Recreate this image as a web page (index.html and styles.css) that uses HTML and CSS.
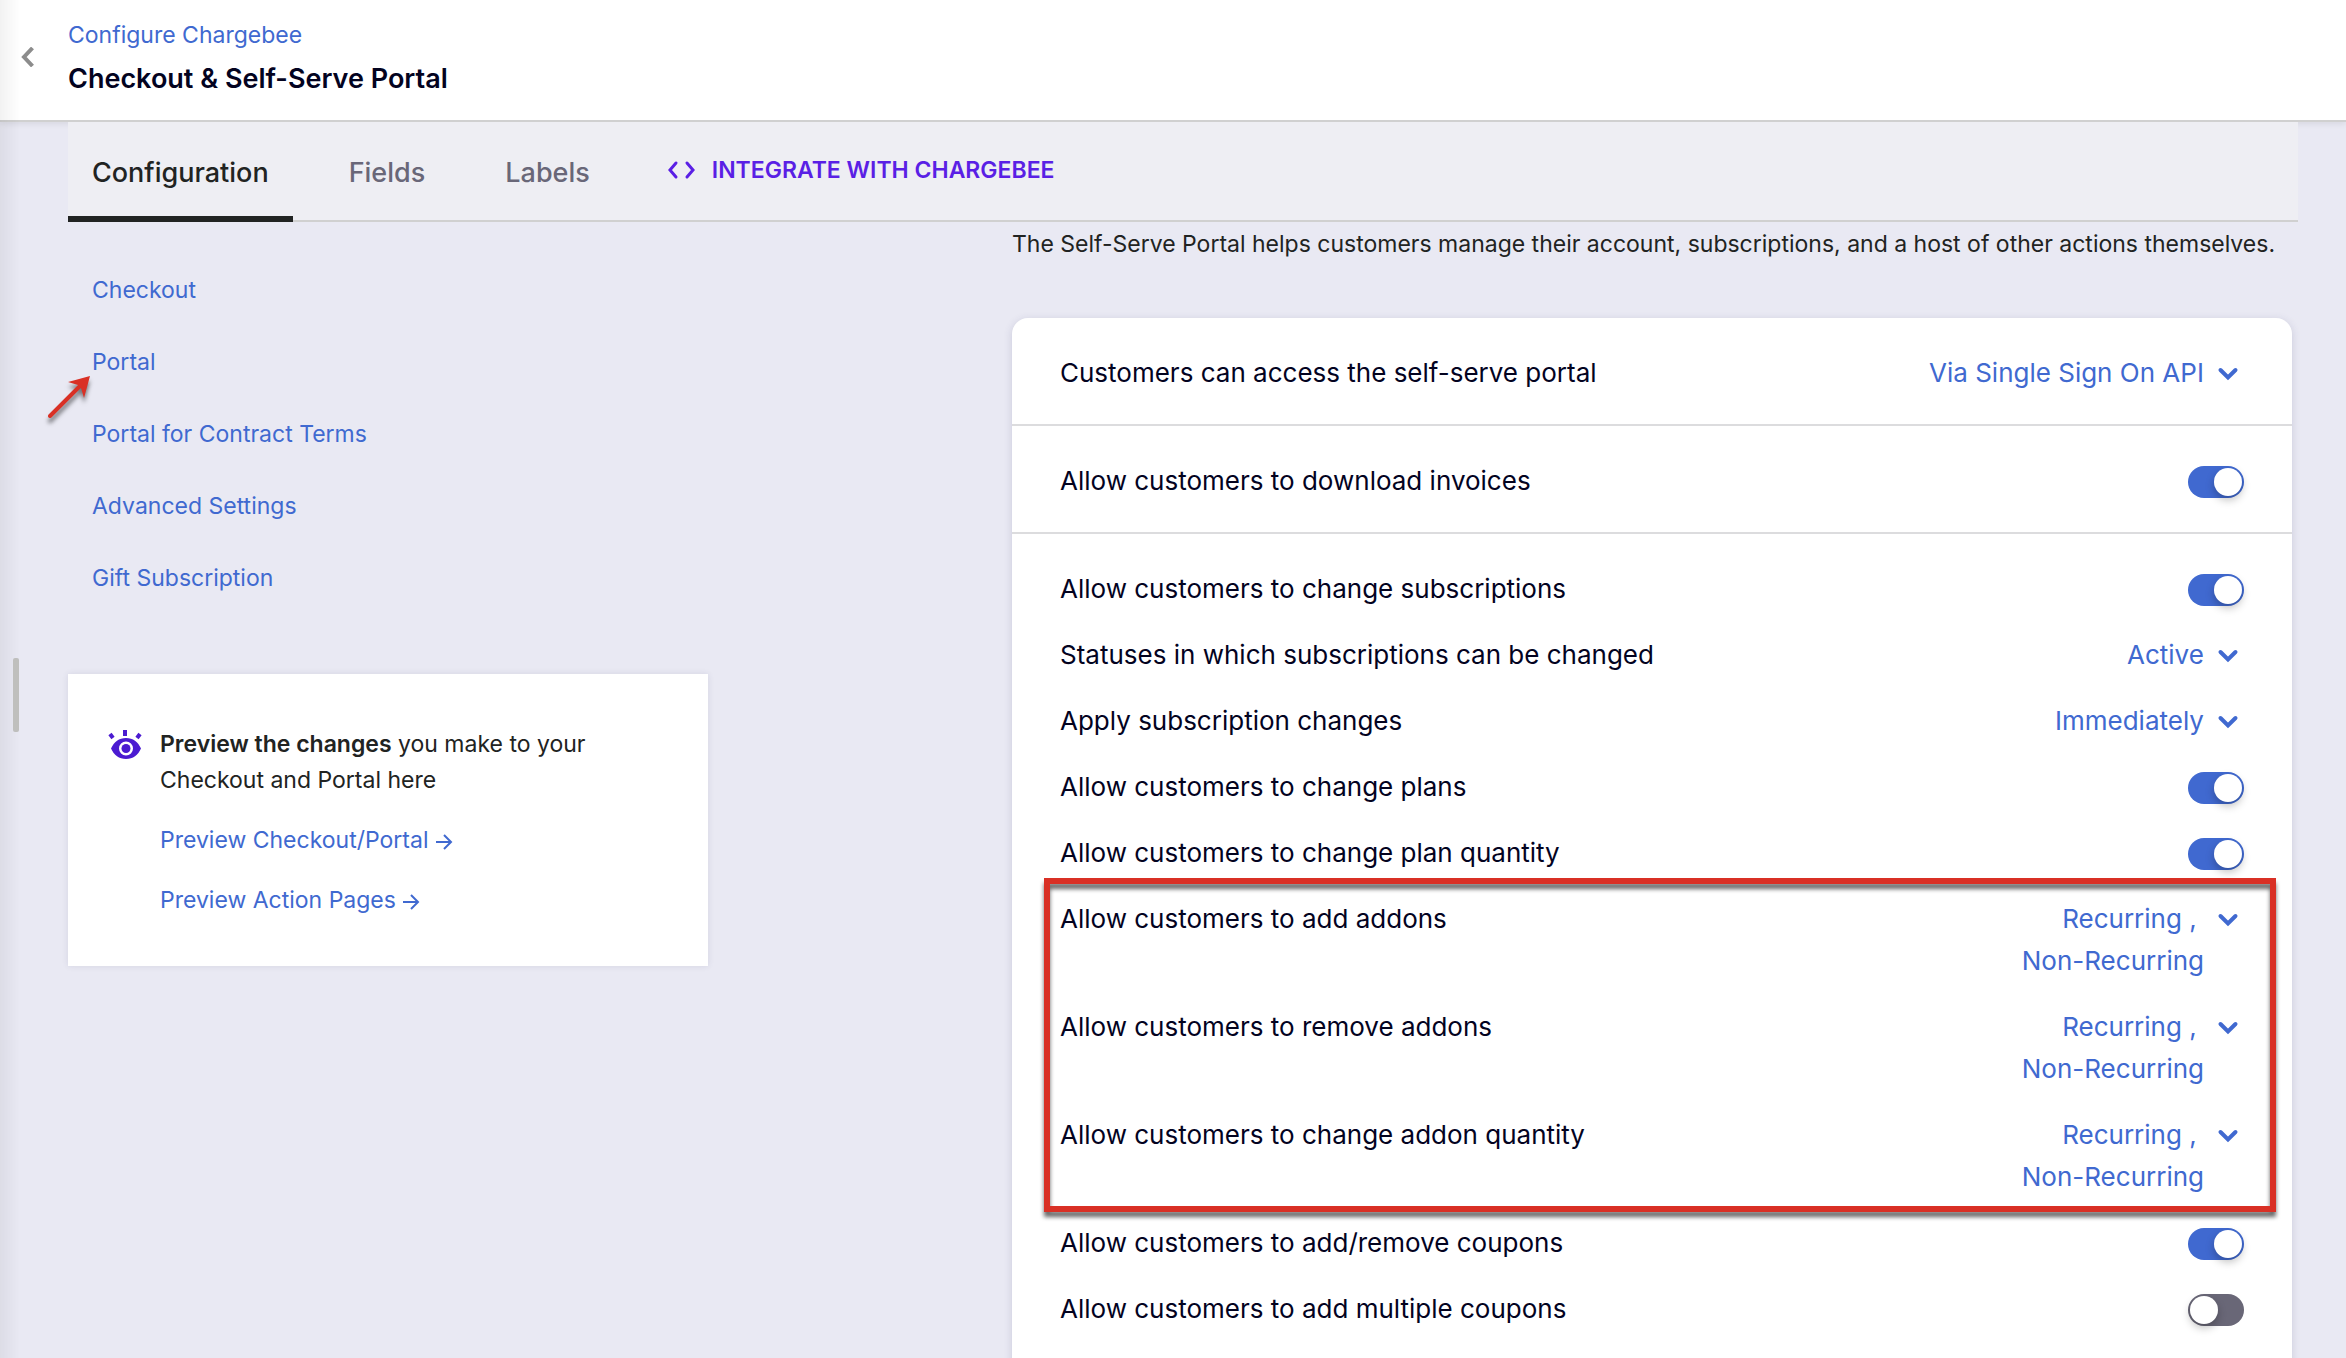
FILE: index.html
```html
<!DOCTYPE html>
<html lang="en">
<head>
  <meta charset="UTF-8">
  <title>Checkout & Self-Serve Portal</title>
  <link rel="stylesheet" href="styles.css">
</head>
<body>
  <!-- Shared icons -->
  <svg class="sprite" aria-hidden="true">
    <symbol id="chevron" viewBox="0 0 32 32">
      <path d="M8.500 12 L16 19.500 L23.500 12" fill="none" stroke="currentColor" stroke-width="4" stroke-linecap="round"/>
    </symbol>
    <symbol id="arrow" viewBox="0 0 18 18">
      <path d="M1 9 H16 M9 2 L16 9 L9 16" fill="none" stroke="currentColor" stroke-width="2"/>
    </symbol>
  </svg>

  <!-- Header -->
  <header class="header">
    <button class="back" aria-label="Back">
      <svg width="14" height="20" viewBox="0 0 14 20"><path d="M12.500 1 L4 10 L12.500 19" fill="none" stroke="#8c8c8c" stroke-width="4"/></svg>
    </button>
    <div class="heading">
      <a class="breadcrumb" href="#">Configure Chargebee</a>
      <h1>Checkout &amp; Self-Serve Portal</h1>
    </div>
  </header>

  <main class="page">
    <!-- Tabs -->
    <nav class="tabs">
      <a class="tab active" href="#">Configuration</a>
      <a class="tab" href="#">Fields</a>
      <a class="tab" href="#">Labels</a>
      <a class="tab integrate" href="#">
        <svg width="30" height="20" viewBox="0 0 30 20"><path d="M10 3 L4 10 L10 17 M21 3 L27 10 L21 17" fill="none" stroke="currentColor" stroke-width="3" stroke-linecap="round"/></svg>
        INTEGRATE WITH CHARGEBEE
      </a>
    </nav>

    <div class="content">
      <!-- Left column -->
      <aside>
        <ul class="side-nav">
          <li><a href="#">Checkout</a></li>
          <li>
            <a href="#">Portal</a>
            <svg class="pointer" width="52" height="56" viewBox="0 0 52 56">
              <path d="M8 44 L38 14" stroke="#d93025" stroke-width="4" stroke-linecap="round"/>
              <path d="M48 4 L26 10 L36 13 L39 16 L42 26 Z" fill="#d93025"/>
            </svg>
          </li>
          <li><a href="#">Portal for Contract Terms</a></li>
          <li><a href="#">Advanced Settings</a></li>
          <li><a href="#">Gift Subscription</a></li>
        </ul>

        <section class="preview">
          <svg width="34" height="32" viewBox="0 0 34 32">
            <path fill="#4b1bd1" fill-rule="evenodd" d="M3 18.500 C6 12 11 8 18 8 C25 8 30 12 33 18.500 C30 25 25 29 18 29 C11 29 6 25 3 18.500 Z M18 11.500 A7 7 0 1 0 18 25.500 A7 7 0 1 0 18 11.500 Z"/>
            <circle cx="18" cy="18.500" r="4.500" fill="#4b1bd1"/>
            <path d="M17 0 V6 M2 4 L5 8 M32 4 L29 8" stroke="#4b1bd1" stroke-width="4"/>
          </svg>
          <div class="preview-body">
            <p><strong>Preview the changes</strong> you make to your Checkout and Portal here</p>
            <a href="#">Preview Checkout/Portal <svg width="18" height="18"><use href="#arrow"/></svg></a>
            <a href="#">Preview Action Pages <svg width="18" height="18"><use href="#arrow"/></svg></a>
          </div>
        </section>
      </aside>

      <!-- Portal settings -->
      <div class="settings">
        <p class="intro">The Self-Serve Portal helps customers manage their account, subscriptions, and a host of other actions themselves.</p>

        <form class="card">
          <div class="group">
            <div class="row">
              <label for="access">Customers can access the self-serve portal</label>
              <div class="dropdown">
                <select id="access"><option>Via Single Sign On API</option></select>
                <svg width="32" height="32"><use href="#chevron"/></svg>
              </div>
            </div>
          </div>

          <div class="group">
            <div class="row">
              <label for="invoices">Allow customers to download invoices</label>
              <input class="toggle" type="checkbox" id="invoices" checked>
            </div>
          </div>

          <div class="group">
            <div class="row">
              <label for="subscriptions">Allow customers to change subscriptions</label>
              <input class="toggle" type="checkbox" id="subscriptions" checked>
            </div>
            <div class="row">
              <label for="statuses">Statuses in which subscriptions can be changed</label>
              <div class="dropdown">
                <select id="statuses"><option>Active</option></select>
                <svg width="32" height="32"><use href="#chevron"/></svg>
              </div>
            </div>
            <div class="row">
              <label for="apply">Apply subscription changes</label>
              <div class="dropdown">
                <select id="apply"><option>Immediately</option></select>
                <svg width="32" height="32"><use href="#chevron"/></svg>
              </div>
            </div>
            <div class="row">
              <label for="plans">Allow customers to change plans</label>
              <input class="toggle" type="checkbox" id="plans" checked>
            </div>
            <div class="row">
              <label for="planQuantity">Allow customers to change plan quantity</label>
              <input class="toggle" type="checkbox" id="planQuantity" checked>
            </div>

            <!-- Addon permissions, multiple values each -->
            <div class="addons">
              <div class="row">
                <label for="addAddons">Allow customers to add addons</label>
                <button class="dropdown" type="button" id="addAddons">
                  <span>Recurring ,&nbsp;<br>Non-Recurring</span>
                  <svg width="32" height="32"><use href="#chevron"/></svg>
                </button>
              </div>
              <div class="row">
                <label for="removeAddons">Allow customers to remove addons</label>
                <button class="dropdown" type="button" id="removeAddons">
                  <span>Recurring ,&nbsp;<br>Non-Recurring</span>
                  <svg width="32" height="32"><use href="#chevron"/></svg>
                </button>
              </div>
              <div class="row">
                <label for="addonQuantity">Allow customers to change addon quantity</label>
                <button class="dropdown" type="button" id="addonQuantity">
                  <span>Recurring ,&nbsp;<br>Non-Recurring</span>
                  <svg width="32" height="32"><use href="#chevron"/></svg>
                </button>
              </div>
            </div>

            <div class="row">
              <label for="coupons">Allow customers to add/remove coupons</label>
              <input class="toggle" type="checkbox" id="coupons" checked>
            </div>
            <div class="row">
              <label for="multipleCoupons">Allow customers to add multiple coupons</label>
              <input class="toggle" type="checkbox" id="multipleCoupons">
            </div>
          </div>
        </form>
      </div>
    </div>
  </main>

  <!-- Collapsed side drawer -->
  <div class="drawer-edge"><span class="drawer-handle"></span></div>
</body>
</html>
```

FILE: styles.css
```css
* { box-sizing: border-box; }

body {
  margin: 0;
  height: 100vh;
  overflow: hidden;
  background: #e9e9f3;
  color: #212322;
  font-family: Inter, "Liberation Sans", sans-serif;
  font-size: 23px;
  line-height: 36px;
}

a { color: #4069d0; text-decoration: none; }
p, h1, ul { margin: 0; padding: 0; }
.sprite { display: none; }

/* Header */
.header {
  position: relative;
  display: flex;
  align-items: center;
  height: 122px;
  padding-bottom: 6px;
  background: #fff;
  border-bottom: 2px solid #d0d0d0;
  box-shadow: 0 2px 6px rgba(0, 0, 0, 0.08);
}
.back {
  display: flex;
  width: 68px;
  padding: 0 0 0 20px;
  border: none;
  background: none;
  cursor: pointer;
}
.heading {
  display: flex;
  flex-direction: column;
  gap: 8px;
}
.heading h1 {
  font-size: 27px;
  font-weight: 600;
  color: #03031f;
}

.page { padding: 0 48px 0 68px; }

/* Tabs */
.tabs {
  position: relative;
  display: flex;
  gap: 32px;
  height: 100px;
  background: #eeeef3;
  border-bottom: 2px solid #d0d0d0;
}
.tab {
  display: flex;
  align-items: center;
  height: 100px;
  padding: 8px 24px 0;
  border-bottom: 6px solid transparent;
  font-size: 27px;
  font-weight: 500;
  color: #696778;
}
.tab.active {
  color: #212322;
  border-color: #212322;
}
.tab.integrate {
  gap: 16px;
  padding: 2px 20px 0;
  font-size: 23px;
  font-weight: 600;
  color: #5a1fe5;
}

.content {
  display: grid;
  grid-template-columns: 1fr 2fr;
  gap: 304px;
  padding-right: 6px;
}

/* Left navigation */
.side-nav {
  display: flex;
  flex-direction: column;
  gap: 36px;
  padding: 50px 24px 78px;
  list-style: none;
}
.side-nav li { position: relative; }
.pointer {
  position: absolute;
  top: 28px;
  left: -50px;
  filter: drop-shadow(0 5px 2px rgba(0, 0, 0, 0.5));
}

/* Preview box */
.preview {
  display: flex;
  gap: 18px;
  padding: 52px 40px 48px;
  background: #fff;
  box-shadow: 0 0 6px rgba(60, 60, 110, 0.12);
}
.preview > svg {
  flex: none;
  margin-top: 4px;
}
.preview-body {
  display: flex;
  flex-direction: column;
  gap: 24px;
  max-width: 440px;
}
.preview-body strong { font-weight: 600; }
.preview-body a svg { vertical-align: -3px; }

/* Settings card */
.intro { padding: 4px 0 56px; }
.card {
  background: #fff;
  border-radius: 16px;
  box-shadow: 0 2px 8px rgba(60, 60, 110, 0.18);
  color: #03031f;
  font-size: 26px;
  line-height: 42px;
}
.group {
  display: flex;
  flex-direction: column;
  gap: 24px;
  padding: 34px 48px 30px;
  border-bottom: 2px solid #dcdcde;
}
.group:last-child {
  padding-bottom: 80px;
  border-bottom: none;
}
.row {
  display: flex;
  justify-content: space-between;
  align-items: flex-start;
}

.dropdown {
  display: flex;
  gap: 8px;
  padding: 0;
  border: none;
  background: none;
  color: #4069d0;
  font: inherit;
  text-align: right;
  cursor: pointer;
}
.dropdown svg {
  flex: none;
  margin-top: 6px;
}
.dropdown select {
  appearance: none;
  height: 42px;
  padding: 0;
  border: none;
  background: none;
  color: inherit;
  font: inherit;
}

.toggle {
  appearance: none;
  width: 56px;
  height: 32px;
  margin: 6px 0 0;
  padding: 2px;
  border-radius: 16px;
  background: #696777;
  cursor: pointer;
}
.toggle::before {
  content: "";
  display: block;
  width: 28px;
  height: 28px;
  border-radius: 50%;
  background: #fff;
  box-shadow: 0 4px 8px rgba(0, 0, 0, 0.25);
}
.toggle:checked { background: #4069d0; }
.toggle:checked::before { margin-left: auto; }

/* Addon rows with highlight frame */
.addons {
  position: relative;
  display: flex;
  flex-direction: column;
  gap: 24px;
}
.addons::after {
  content: "";
  position: absolute;
  inset: -20px -32px -14px -16px;
  border: 6px solid #d93025;
  filter: drop-shadow(0 5px 2px rgba(0, 0, 0, 0.6));
  pointer-events: none;
}

/* Drawer edge */
.drawer-edge {
  position: fixed;
  top: 0;
  bottom: 0;
  left: 0;
  width: 20px;
  background: linear-gradient(to right, rgba(0, 0, 0, 0.05), transparent);
  pointer-events: none;
}
.drawer-handle {
  position: absolute;
  top: 658px;
  right: 1px;
  width: 6px;
  height: 74px;
  border-radius: 2px;
  background: #bfbfbd;
}
```
